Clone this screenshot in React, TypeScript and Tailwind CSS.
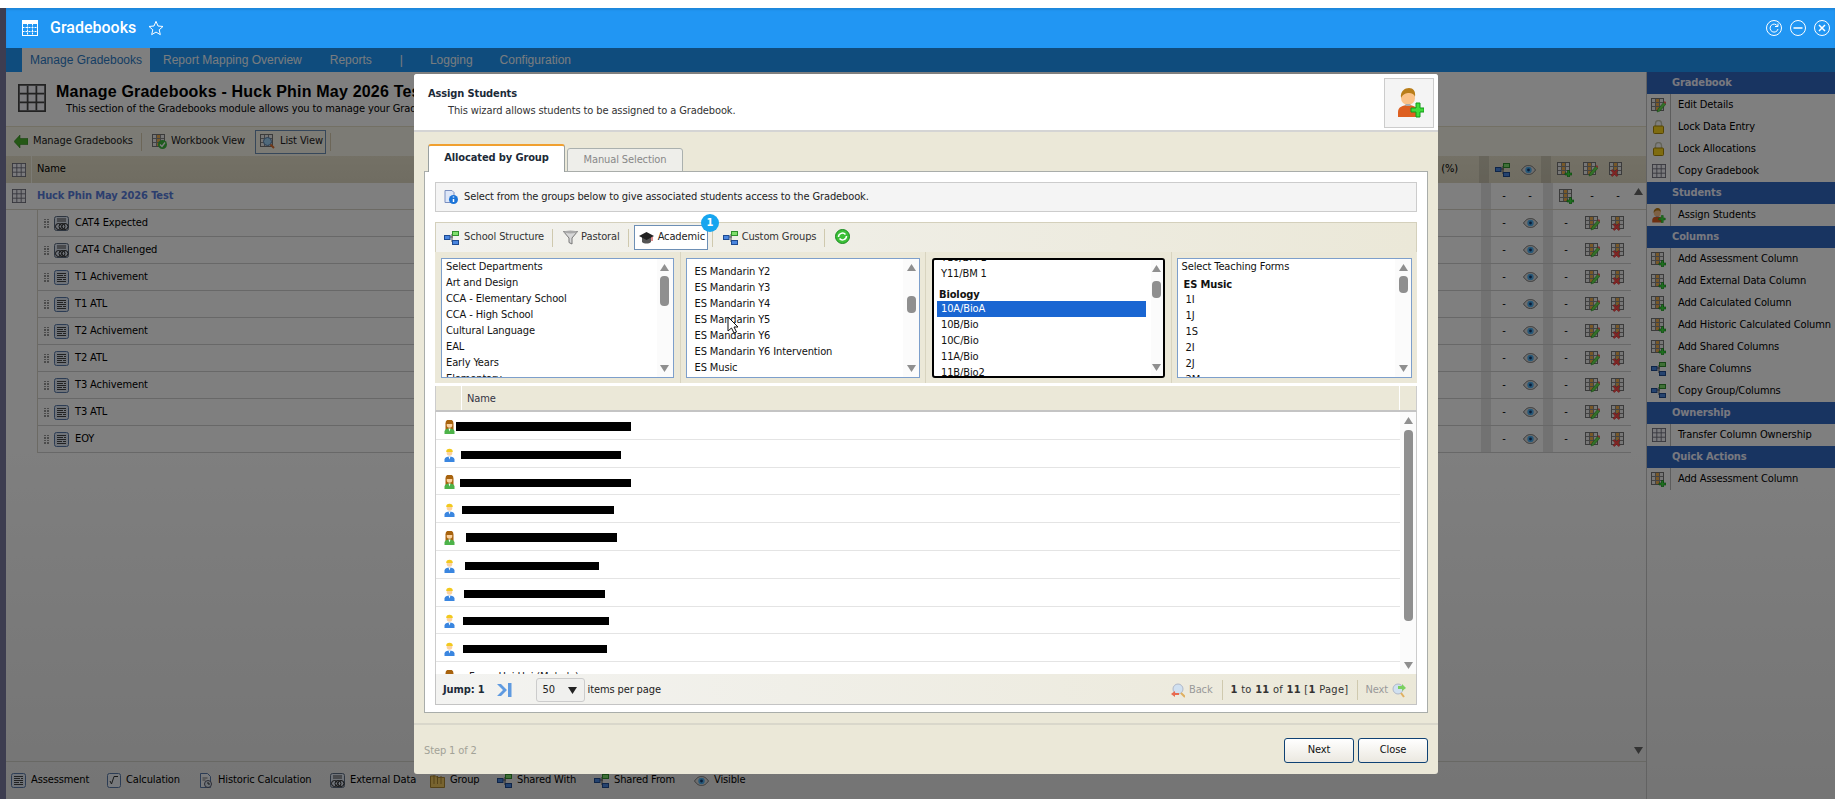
import React from "react";

const T = "font-['DejaVu_Sans_Condensed','Liberation_Sans',sans-serif] text-[11px] tracking-[-0.12px]";

function Grid({ s = 16, c = "#6a6a78", f = "#f4f4fa" }: { s?: number; c?: string; f?: string }) {
  return (
    <svg width={s} height={s} viewBox="0 0 16 16" className="shrink-0">
      <rect x="0.5" y="0.5" width="15" height="15" fill={f} stroke={c} />
      <path d="M5.5 1v14M10.5 1v14M1 5.5h14M1 10.5h14" stroke={c} fill="none" />
    </svg>
  );
}
function GridCheck() {
  return (
    <svg width="15" height="15" viewBox="0 0 15 15" className="shrink-0">
      <rect x="0.500" y="0.500" width="12" height="12" fill="#eee" stroke="#777" />
      <rect x="4.500" y="1" width="4" height="11" fill="#f0b050" />
      <path d="M1 4.500h11M1 8.500h11M4.500 1v11M8.500 1v11" stroke="#888" fill="none" />
      <circle cx="10.500" cy="10.500" r="4.500" fill="#3cb83c" />
      <path d="M8 10.500l2 2 3-4" stroke="#fff" strokeWidth="1.300" fill="none" />
    </svg>
  );
}
function GridLens() {
  return (
    <svg width="15" height="15" viewBox="0 0 15 15" className="shrink-0">
      <rect x="0.500" y="0.500" width="12" height="12" fill="#eee" stroke="#777" />
      <path d="M1 4.500h11M1 8.500h11M4.500 1v11M8.500 1v11" stroke="#888" fill="none" />
      <circle cx="7.500" cy="7.500" r="4" fill="#9fd4f8" stroke="#5b7fa8" />
      <path d="M10.500 10.500l3.500 3.500" stroke="#e07030" strokeWidth="2" />
    </svg>
  );
}
function ColBase() {
  return (
    <>
      <rect x="0.5" y="0.5" width="12" height="12" fill="#eee" stroke="#777" />
      <rect x="4.5" y="1" width="4" height="11" fill="#f0b050" />
      <path d="M1 4.5h11M1 8.5h11M4.5 1v11M8.5 1v11" stroke="#888" fill="none" />
    </>
  );
}
function ColAdd() {
  return (
    <svg width="15" height="15" viewBox="0 0 15 15" className="shrink-0">
      <ColBase />
      <path d="M8 11h2.500V8.500h2V11H15v2h-2.500v2h-2v-2H8z" fill="#3fe040" stroke="#0a7f10" strokeWidth="0.6" />
    </svg>
  );
}
function ColEdit() {
  return (
    <svg width="15" height="15" viewBox="0 0 15 15" className="shrink-0">
      <ColBase />
      <path d="M6 14l1-3 6-7 2 2-6 7z" fill="#68e050" stroke="#1c8a1c" strokeWidth="0.5" />
      <path d="M12.600 4.400l1.200-1.400 1.600 1.600-1.200 1.400z" fill="#ff6060" />
    </svg>
  );
}
function ColDel() {
  return (
    <svg width="15" height="15" viewBox="0 0 15 15" className="shrink-0">
      <ColBase />
      <path d="M2 8.500l1.500-1 2 2 2-2 1.500 1-2 2.500 2 2.500-1.500 1-2-2-2 2-1.500-1 2-2.500z" fill="#ff4a4a" stroke="#c02020" strokeWidth="0.4" />
    </svg>
  );
}
function Share() {
  return (
    <svg width="15" height="14" viewBox="0 0 15 14" className="shrink-0">
      <path d="M6 6h3M8 3v8h1" stroke="#555" fill="none" />
      <rect x="0.500" y="4.500" width="5.500" height="4" fill="#4a86df" stroke="#1e4a90" />
      <rect x="8.500" y="0.500" width="6" height="4" fill="#7fe06c" stroke="#2f8f2c" />
      <rect x="8.500" y="9.500" width="6" height="4" fill="#4a86df" stroke="#1e4a90" />
    </svg>
  );
}
function Eye() {
  return (
    <svg width="15" height="10" viewBox="0 0 15 10" className="shrink-0">
      <path d="M0.500 5C3 1.500 5 0.500 7.500 0.500S12 1.500 14.500 5C12 8.500 10 9.500 7.500 9.500S3 8.500 0.500 5z" fill="#ddd" stroke="#777" />
      <circle cx="7.500" cy="5" r="3.200" fill="#4fb0f0" />
      <circle cx="7.500" cy="5" r="1.400" fill="#123a70" />
    </svg>
  );
}
function Lock() {
  return (
    <svg width="11" height="14" viewBox="0 0 11 14" className="shrink-0">
      <path d="M2.500 6V3.500a3 3 0 0 1 6 0V6" stroke="#c8c8b0" strokeWidth="1.400" fill="none" />
      <rect x="0.500" y="6" width="10" height="7.500" rx="1" fill="#ffd820" stroke="#a88808" />
    </svg>
  );
}
function Person({ kind }: { kind: "m" | "f" }) {
  const hair = kind === "m" ? "#f2c91e" : "#a8630e";
  const body = kind === "m" ? "#3a86e0" : "#4db34a";
  return (
    <svg width="11" height="14" viewBox="0 0 11 14" className="shrink-0">
      {kind === "f" && <path d="M1.500 10V3.500a4 4 0 0 1 8 0V10z" fill={hair} />}
      <path d="M0.500 14v-2.500C0.500 9.500 3 8.500 5.500 8.500s5 1 5 3V14z" fill={body} />
      <path d="M4.500 8.500l1 3 1-3z" fill="#fff" />
      <circle cx="5.500" cy="5" r="2.800" fill="#fbd2a0" />
      <path d="M2.200 4a3.300 3.300 0 0 1 6.600 0z" fill={hair} />
    </svg>
  );
}
function BigPerson({ small = false }: { small?: boolean }) {
  const w = small ? 15 : 27;
  const h = small ? 15 : 30;
  return (
    <svg width={w} height={h} viewBox="0 0 27 30" className="shrink-0">
      <path d="M1 29v-5C1 19 6 17 11 17s10 2 10 7v5z" fill="#dd5f20" />
      <circle cx="11" cy="10" r="7" fill="#fbc288" />
      <path d="M4 10C3 3 8 0 12 0s7 3 6 9c-1-3-3-4-6-4s-6 1-8 5z" fill="#b97d18" />
      <rect x="8.500" y="16" width="5" height="2" fill="#aaa" />
      <path d="M14 19h5v-5h4v5h4v4h-4v5h-4v-5h-5z" transform="translate(0 1)" fill="#3fdc3a" stroke="#129a19" strokeWidth="1" />
    </svg>
  );
}
function Doc() {
  return (
    <svg width="15" height="15" viewBox="0 0 15 15" className="shrink-0">
      <rect x="0.500" y="0.500" width="14" height="14" rx="2" fill="#dfe6f2" stroke="#5878a8" />
      <path d="M3 3.500h9M3 5.500h6M10 5.500h2M3 7.500h9M3 9.500h5M9 9.500h3M3 11.500h9" stroke="#444" fill="none" />
    </svg>
  );
}
function ExtDoc() {
  return (
    <svg width="15" height="15" viewBox="0 0 15 15" className="shrink-0">
      <rect x="0.500" y="0.500" width="14" height="14" rx="2" fill="#dfe6f2" stroke="#5a6a80" />
      <path d="M3 3h9M3 5h9" stroke="#444" fill="none" />
      <circle cx="4.500" cy="10.500" r="3" fill="none" stroke="#222" />
      <circle cx="8" cy="10.500" r="3" fill="none" stroke="#222" />
      <circle cx="11" cy="10.500" r="3" fill="none" stroke="#222" />
    </svg>
  );
}
function Calc() {
  return (
    <svg width="14" height="15" viewBox="0 0 14 15" className="shrink-0">
      <rect x="0.500" y="0.500" width="13" height="14" rx="2" fill="#eef2f8" stroke="#5878a8" />
      <path d="M3 8l1.500 3L7 3.500h4" stroke="#333" fill="none" />
    </svg>
  );
}
function Hist() {
  return (
    <svg width="14" height="15" viewBox="0 0 14 15" className="shrink-0">
      <path d="M1.500 .500h7l3 3v11h-10z" fill="#f2f4f8" stroke="#5878a8" />
      <path d="M3.500 5h5M3.500 7h3" stroke="#777" />
      <circle cx="9" cy="11" r="3.500" fill="#dde8f4" stroke="#556" />
      <path d="M9 9v2h2" stroke="#333" fill="none" />
    </svg>
  );
}
function Folder() {
  return (
    <svg width="15" height="14" viewBox="0 0 15 14" className="shrink-0">
      <path d="M.500 2h5l2 1.500h7v10H.500z" fill="#f0c860" stroke="#a88530" />
      <path d="M4 1v9M7.500 2v8M11 2v8" stroke="#a88530" />
    </svg>
  );
}
function Arrow({ down = false, c = "#8f8f8f" }: { down?: boolean; c?: string }) {
  return (
    <svg width="9" height="7" viewBox="0 0 9 7" className="shrink-0">
      <path d={down ? "M0 0h9L4.500 7z" : "M0 7h9L4.500 0z"} fill={c} />
    </svg>
  );
}
function Scroll({ offset, thumb, w = "w-[16px]" }: { offset: string; thumb: string; w?: string }) {
  return (
    <div className={"flex shrink-0 flex-col items-center bg-[#fbfbfb] py-[5px] " + w}>
      <Arrow />
      <div className={"w-[9px] rounded-[4px] bg-[#8f8f8f] " + offset + " " + thumb} />
      <div className="flex-1" />
      <Arrow down />
    </div>
  );
}
function ListBox({ children, scroll, black = false }: { children: React.ReactNode; scroll: React.ReactNode; black?: boolean }) {
  return (
    <div className={"flex h-[120px] flex-1 overflow-hidden bg-white " + (black ? "border-2 border-black rounded-[3px]" : "border border-[#7d9fcb]")}>
      <div className="min-w-0 flex-1 overflow-hidden text-[#111]">{children}</div>
      {scroll}
    </div>
  );
}
function Li({ children, className = "" }: { children: React.ReactNode; className?: string }) {
  return <div className={"h-[16px] leading-[16px] whitespace-nowrap " + className}>{children}</div>;
}
function Sep({ className = "" }: { className?: string }) {
  return <div className={"w-px bg-[#cfc9ae] shrink-0 " + className} />;
}

const rows = [
  { h: "h-[28px]", p: "f", bar: "ml-[1px] w-[175px] h-[9px]" },
  { h: "h-[28px]", p: "m", bar: "ml-[6px] w-[160px] h-[8px]" },
  { h: "h-[27px]", p: "f", bar: "ml-[5px] w-[171px] h-[8px] mt-[2px]" },
  { h: "h-[28px]", p: "m", bar: "ml-[7px] w-[152px] h-[8px]" },
  { h: "h-[28px]", p: "f", bar: "ml-[11px] w-[151px] h-[9px]" },
  { h: "h-[28px]", p: "m", bar: "ml-[10px] w-[134px] h-[8px]" },
  { h: "h-[28px]", p: "m", bar: "ml-[9px] w-[141px] h-[8px]" },
  { h: "h-[27px]", p: "m", bar: "ml-[8px] w-[146px] h-[8px]" },
  { h: "h-[28px]", p: "m", bar: "ml-[8px] w-[144px] h-[8px] mt-[1px]" },
] as const;

function Modal() {
  return (
    <div className={"absolute left-[408px] top-[66px] flex h-[700px] w-[1024px] flex-col overflow-hidden rounded-[3px] bg-[#ebe8d8] text-[#222] " + T}>
      <div className="flex h-[58px] shrink-0 justify-between border-b-2 border-[#d4d4d4] bg-white pl-[14px] pr-[4px] pt-[4px]">
        <div className="pt-[8px]">
          <div className="font-bold leading-[16px] text-[#1c2a38]">Assign Students</div>
          <div className="mt-[1px] pl-[20px] leading-[16px] text-[#333]">This wizard allows students to be assigned to a Gradebook.</div>
        </div>
        <div className="flex h-[50px] w-[50px] items-center justify-center border border-[#cccccc] bg-[#f4f4f4] pl-[3px]">
          <BigPerson />
        </div>
      </div>

      <div className="flex flex-1 flex-col px-[10px] pt-[12px] pb-[10px]">
        <div className="-mb-px flex h-[28px] shrink-0 items-end gap-[2px] pl-[4px]">
          <div className="relative z-10 flex h-[28px] w-[137px] items-center justify-center rounded-t-[3px] border-x border-[#99a0a0] border-t-2 border-t-[#f0a030] bg-white pb-[2px] font-bold text-[#1c2a38]">Allocated by Group</div>
          <div className="flex h-[24px] w-[116px] items-center justify-center rounded-t-[3px] border border-[#aab0ae] bg-[#eeeeea] text-[#888]">Manual Selection</div>
        </div>
        <div className="flex flex-1 flex-col border border-[#a9adaa] bg-white px-[10px] pt-[10px]">
          <div className="flex h-[30px] shrink-0 items-center gap-[6px] border border-[#cccccc] bg-[#f4f4f4] pl-[8px] text-[#222]">
            <svg width="14" height="14" viewBox="0 0 14 14" className="shrink-0">
              <path d="M1 .500h7l2 2v10H1z" fill="#dde6f8" stroke="#7a8fc0" />
              <circle cx="9.500" cy="9.500" r="4.500" fill="#1c74d8" />
              <path d="M9.500 6.500v1M9.500 9v3" stroke="#fff" strokeWidth="1.500" />
            </svg>
            Select from the groups below to give associated students access to the Gradebook.
          </div>

          <div className="mt-[10px] flex h-[30px] shrink-0 items-center border border-b-0 border-[#d4d0bc] bg-gradient-to-r from-[#f2f2ef] to-[#ebe8d8] pl-[8px] text-[#333]">
            <Share />
            <span className="ml-[5px]">School Structure</span>
            <Sep className="ml-[8px] h-[18px]" />
            <svg width="15" height="15" viewBox="0 0 15 15" className="ml-[10px] shrink-0">
              <path d="M.500 1.500h14L9 8v6l-3-1.500V8z" fill="#d8d8d8" stroke="#777" />
              <ellipse cx="7.500" cy="2" rx="7" ry="1.500" fill="#aaa" />
            </svg>
            <span className="ml-[3px]">Pastoral</span>
            <Sep className="ml-[8px] h-[18px]" />
            <div className="ml-[5px] flex h-[25px] w-[74px] shrink-0 items-center border border-[#6d8fb5] bg-white pl-[4px] text-[#222]">
              <svg width="15" height="12" viewBox="0 0 15 12" className="shrink-0">
                <path d="M3 5v5c2 2 7 2 9 0V5z" fill="#555" />
                <path d="M0 4l7.500-4L15 4l-7.500 4z" fill="#222" />
                <path d="M13 5v4" stroke="#c02020" />
              </svg>
              <span className="ml-[4px]">Academic</span>
            </div>
            <Sep className="ml-[4px] h-[18px]" />
            <div className="ml-[10px]"><Share /></div>
            <span className="ml-[4px]">Custom Groups</span>
            <Sep className="ml-[8px] h-[18px]" />
            <svg width="15" height="15" viewBox="0 0 15 15" className="ml-[10px] -mt-[2px] shrink-0">
              <circle cx="7.500" cy="7.500" r="7" fill="#3cc038" stroke="#1a8a20" />
              <path d="M3.500 8a4 4 0 0 1 7-2.500M11.500 7a4 4 0 0 1-7 2.500" stroke="#fff" strokeWidth="1.500" fill="none" />
            </svg>
          </div>

          <div className="grid h-[131px] shrink-0 grid-cols-4 bg-[#ebe8d8]">
            <div className="flex border-r border-[#d8d4c0] px-[6px] pt-[6px]">
              <ListBox scroll={<Scroll offset="mt-[5px]" thumb="h-[30px]" />}>
                <div className="pl-[4px]">
                  {["Select Departments", "Art and Design", "CCA - Elementary School", "CCA - High School", "Cultural Language", "EAL", "Early Years", "Elementary"].map((t) => (
                    <Li key={t}>{t}</Li>
                  ))}
                </div>
              </ListBox>
            </div>
            <div className="flex border-r border-[#d8d4c0] px-[5px] pt-[6px]">
              <ListBox scroll={<Scroll offset="mt-[25px]" thumb="h-[17px]" />}>
                <div className="pl-[8px] pt-[5px]">
                  {["ES Mandarin Y2", "ES Mandarin Y3", "ES Mandarin Y4", "ES Mandarin Y5", "ES Mandarin Y6", "ES Mandarin Y6 Intervention", "ES Music"].map((t) => (
                    <Li key={t}>{t}</Li>
                  ))}
                </div>
              </ListBox>
            </div>
            <div className="flex border-r border-[#d8d4c0] px-[6px] pt-[6px]">
              <ListBox black scroll={<Scroll w="w-[12px]" offset="mt-[9px]" thumb="h-[17px]" />}>
                <div className="-mt-[10px] pl-[3px] pr-[5px]">
                  <Li className="pl-[4px]">Y10/BM 1</Li>
                  <Li className="pl-[4px]">Y11/BM 1</Li>
                  <Li className="mt-[5px] -mb-[2px] pl-[2px] font-bold">Biology</Li>
                  <Li className="bg-[#1a66d2] pl-[4px] text-white">10A/BioA</Li>
                  <Li className="pl-[4px]">10B/Bio</Li>
                  <Li className="pl-[4px]">10C/Bio</Li>
                  <Li className="pl-[4px]">11A/Bio</Li>
                  <Li className="pl-[4px]">11B/Bio2</Li>
                </div>
              </ListBox>
            </div>
            <div className="flex px-[5px] pt-[6px]">
              <ListBox scroll={<Scroll offset="mt-[5px]" thumb="h-[17px]" />}>
                <div className="pl-[4px]">
                  <Li>Select Teaching Forms</Li>
                  <Li className="mt-[2px] -mb-[1px] pl-[2px] font-bold">ES Music</Li>
                  {["1I", "1J", "1S", "2I", "2J", "2M"].map((t) => (
                    <Li key={t} className="pl-[4px]">{t}</Li>
                  ))}
                </div>
              </ListBox>
            </div>
          </div>

          <div className="mt-[3px] flex h-[26px] shrink-0 border-x border-b-2 border-x-[#cccccc] border-b-[#c4c4c4] bg-[#ebe8d8] text-[#334]">
            <div className="w-[26px] border-r border-white" />
            <div className="flex flex-1 items-center border-r border-white pl-[5px] pt-[2px]">Name</div>
            <div className="w-[16px]" />
          </div>
          <div className="flex h-[262px] shrink-0 overflow-hidden border-x border-[#cccccc] bg-white">
            <div className="min-w-0 flex-1 overflow-hidden">
              {rows.map((r, i) => (
                <div key={i} className={"flex shrink-0 items-center border-b border-[#e4e4e4] pl-[8px] pt-[2px] " + r.h}>
                  <Person kind={r.p} />
                  <div className={"bg-black " + r.bar} />
                </div>
              ))}
              <div className="flex items-start pl-[8px] pt-[8px]">
                <Person kind="f" />
                <span className="ml-[14px] leading-[14px]">Fong, Hoi Hoi (Melody)</span>
              </div>
            </div>
            <Scroll offset="mt-[6px]" thumb="h-[191px]" />
          </div>
          <div className="flex h-[31px] shrink-0 items-center border border-t-0 border-[#c4c4c4] bg-gradient-to-r from-[#f3f3f1] to-[#ebe8d8] pl-[7px] pr-[10px] pt-[2px] text-[#222]">
            <b className="text-[#1c2a38]">Jump: 1</b>
            <svg width="15" height="14" viewBox="0 0 15 14" className="ml-[12px] shrink-0">
              <path d="M0 1h4l6 6-6 6H0l6-6z" fill="#5f9ae0" />
              <rect x="11" y="0" width="3.500" height="14" fill="#5f9ae0" />
            </svg>
            <div className="ml-[24px] flex h-[24px] w-[49px] items-center justify-between rounded-[3px] border border-[#cccccc] bg-[#f0f0ee] px-[6px] pr-[7px]">
              50
              <Arrow down c="#222" />
            </div>
            <span className="ml-[3px]">items per page</span>
            <div className="flex-1" />
            <svg width="14" height="15" viewBox="0 0 14 15" className="shrink-0">
              <circle cx="7" cy="6" r="5" fill="#d0e0f0" stroke="#b0b8c8" />
              <path d="M10 10l4 4" stroke="#e0b060" strokeWidth="2" />
              <path d="M0 11l4-3v2h4v2H4v2z" fill="#e86a50" />
            </svg>
            <span className="ml-[4px] text-[#999]">Back</span>
            <Sep className="ml-[9px] h-[20px]" />
            <span className="ml-[8px] tracking-[0.3px] text-[#333]"><b>1</b> to <b>11</b> of <b>11</b> [<b>1</b> Page]</span>
            <Sep className="ml-[9px] h-[20px]" />
            <span className="ml-[7px] text-[#999]">Next</span>
            <svg width="14" height="15" viewBox="0 0 14 15" className="ml-[4px] shrink-0">
              <circle cx="6" cy="6" r="5" fill="#d0e0f0" stroke="#b0b8c8" />
              <path d="M9 10l3 4" stroke="#e0b060" strokeWidth="2" />
              <path d="M14 5l-4-4v2H6v3h4v2z" fill="#7bd060" />
            </svg>
          </div>
        </div>
      </div>

      <div className="flex h-[51px] shrink-0 items-center justify-between border-t-2 border-t-[#d9d7cb] px-[10px] pt-[2px]">
        <span className="mt-[2px] text-[#a2a297]">Step 1 of 2</span>
        <div className="flex gap-[4px]">
          <div className="flex h-[25px] w-[70px] items-center justify-center rounded-[3px] border border-[#0f4274] bg-gradient-to-b from-white to-[#ebe8e0] text-[#111]">Next</div>
          <div className="flex h-[25px] w-[70px] items-center justify-center rounded-[3px] border border-[#0f4274] bg-gradient-to-b from-white to-[#ebe8e0] text-[#111]">Close</div>
        </div>
      </div>
    </div>
  );
}

const side: { head: string; items: [string, React.ReactNode][] }[] = [
  {
    head: "Gradebook",
    items: [
      ["Edit Details", <ColEdit />],
      ["Lock Data Entry", <Lock />],
      ["Lock Allocations", <Lock />],
      ["Copy Gradebook", <Grid s={14} />],
    ],
  },
  { head: "Students", items: [["Assign Students", <BigPerson small />]] },
  {
    head: "Columns",
    items: [
      ["Add Assessment Column", <ColAdd />],
      ["Add External Data Column", <ColAdd />],
      ["Add Calculated Column", <ColAdd />],
      ["Add Historic Calculated Column", <ColAdd />],
      ["Add Shared Columns", <ColAdd />],
      ["Share Columns", <Share />],
      ["Copy Group/Columns", <Share />],
    ],
  },
  { head: "Ownership", items: [["Transfer Column Ownership", <Grid s={14} />]] },
  { head: "Quick Actions", items: [["Add Assessment Column", <ColAdd />]] },
];

function Cols({ a, b, c, d, e }: { a: React.ReactNode; b: React.ReactNode; c: React.ReactNode; d: React.ReactNode; e: React.ReactNode }) {
  const cell = "flex w-[26px] items-center justify-center";
  return (
    <div className="flex h-full shrink-0">
      <div className="w-[10px] bg-black/10" />
      <div className={cell}>{a}</div>
      <div className={cell}>{b}</div>
      <div className="w-[10px] bg-black/10" />
      <div className={cell}>{c}</div>
      <div className={cell}>{d}</div>
      <div className={cell}>{e}</div>
    </div>
  );
}

const children = ["CAT4 Expected", "CAT4 Challenged", "T1 Achivement", "T1 ATL", "T2 Achivement", "T2 ATL", "T3 Achivement", "T3 ATL", "EOY"];
const legend: [string, React.ReactNode, string][] = [
  ["Assessment", <Doc />, "w-[96px]"],
  ["Calculation", <Calc />, "w-[92px]"],
  ["Historic Calculation", <Hist />, "w-[131px]"],
  ["External Data", <ExtDoc />, "w-[100px]"],
  ["Group", <Folder />, "w-[67px]"],
  ["Shared With", <Share />, "w-[97px]"],
  ["Shared From", <Share />, "w-[100px]"],
  ["Visible", <Eye />, "w-[60px]"],
];

export default function App() {
  return (
    <div className={"flex h-screen w-full flex-col overflow-hidden bg-white " + T}>
      <div className="h-[8px] shrink-0 bg-white" />
      <div className="flex min-h-0 flex-1">
        <div className="w-[6px] shrink-0 bg-[#3d3d50]" />
        <div className="relative flex min-w-0 flex-1 flex-col">
          <div className="flex h-[40px] shrink-0 items-center bg-[#2196f3] pl-[16px] text-white shadow-[inset_0_2px_2px_rgba(0,0,0,0.1)]">
            <svg width="16" height="16" viewBox="0 0 16 16" className="shrink-0">
              <rect x="0.500" y="0.500" width="15" height="15" fill="none" stroke="#fff" />
              <rect x="1" y="1" width="14" height="3" fill="#fff" />
              <path d="M5.500 4v11M10.500 4v11M1 7.500h14M1 11.500h14" stroke="#fff" fill="none" strokeDasharray="1 .5" />
            </svg>
            <span className="ml-[12px] font-['Roboto',sans-serif] text-[16px] font-medium tracking-normal">Gradebooks</span>
            <svg width="16" height="16" viewBox="0 0 24 24" fill="none" stroke="#fff" strokeWidth="1.500" className="ml-[12px]">
              <path d="M12 2l3 7 7.500.7-5.700 5 1.700 7.300-6.500-3.900L5.500 22l1.700-7.300-5.700-5L9 9z" />
            </svg>
            <div className="flex-1" />
            <div className="mr-[5px] flex gap-[8px]">
              <svg width="16" height="16" viewBox="0 0 16 16" fill="none" stroke="#fff" className="shrink-0">
                <circle cx="8" cy="8" r="7.500" />
                <path d="M11.500 6a4 4 0 1 0 .5 3M12 3.500v3h-3" />
              </svg>
              <svg width="16" height="16" viewBox="0 0 16 16" fill="none" stroke="#fff" className="shrink-0">
                <circle cx="8" cy="8" r="7.500" />
                <path d="M3.500 8h9" strokeWidth="1.500" />
              </svg>
              <svg width="16" height="16" viewBox="0 0 16 16" fill="none" stroke="#fff" className="shrink-0">
                <circle cx="8" cy="8" r="7.500" />
                <path d="M5 5l6 6M11 5l-6 6" strokeWidth="1.500" />
              </svg>
            </div>
          </div>

          <div className="flex h-[24px] shrink-0 items-center bg-[#1e98fa] pl-[16px] font-['Liberation_Sans',sans-serif] text-[12px] tracking-normal text-[#f0f8ff]">
            <div className="flex h-full w-[128px] items-center justify-center bg-white text-[#2c7cc8]">Manage Gradebooks</div>
            <span className="ml-[13px]">Report Mapping Overview</span>
            <span className="ml-[28px]">Reports</span>
            <span className="ml-[28px]">|</span>
            <span className="ml-[27px]">Logging</span>
            <span className="ml-[27px]">Configuration</span>
          </div>

          <div className="flex min-h-0 flex-1 bg-gradient-to-b from-white via-white to-[#eaeaea]">
            <div className="flex min-w-0 flex-1 flex-col">
              <div className="flex h-[55px] shrink-0 items-center border-b border-[#e6e0c8] pb-[2px] pl-[12px]">
                <Grid s={28} c="#444" f="#f6f6fc" />
                <div className="ml-[10px]">
                  <div className="whitespace-nowrap font-['Liberation_Sans',sans-serif] text-[16px] font-bold leading-[20px] tracking-[0.2px] text-black">Manage Gradebooks - Huck Phin May 2026 Test</div>
                  <div className="ml-[10px] whitespace-nowrap leading-[13px] text-black">This section of the Gradebooks module allows you to manage your Gradebooks.</div>
                </div>
              </div>
              <div className="flex h-[29px] shrink-0 items-center bg-[#f8f6ea] pl-[8px] text-[#222]">
                <svg width="14" height="13" viewBox="0 0 14 13" className="shrink-0">
                  <path d="M0 6.500L6 0v3.500h8v6H6V13z" fill="#4ab02c" stroke="#1f7a10" strokeWidth="0.500" />
                </svg>
                <span className="ml-[5px]">Manage Gradebooks</span>
                <Sep className="ml-[8px] h-[18px] bg-[#d8ccb0]" />
                <div className="ml-[10px]"><GridCheck /></div>
                <span className="ml-[4px]">Workbook View</span>
                <div className="ml-[10px] flex h-[24px] w-[71px] shrink-0 items-center border border-[#6d8fb5] pl-[4px]">
                  <GridLens />
                  <span className="ml-[5px]">List View</span>
                </div>
                <Sep className="ml-[4px] h-[18px] bg-[#d8ccb0]" />
              </div>
              <div className="flex h-[27px] shrink-0 items-center bg-gradient-to-b from-[#e8e2cc] to-[#e0dac4] text-black">
                <div className="flex h-full w-[26px] items-center justify-center border-r border-[#f8f6ea]"><Grid s={14} /></div>
                <span className="ml-[5px]">Name</span>
                <div className="flex-1" />
                <span className="mr-[21px]">(%)</span>
                <Cols
                  a={<Share />}
                  b={<Eye />}
                  c={<ColAdd />}
                  d={<ColEdit />}
                  e={<ColDel />}
                />
                <div className="w-[17px]" />
              </div>
              <div className="flex h-[27px] shrink-0 items-center border-b border-[#d8d4c8] pr-[15px]">
                <div className="flex w-[26px] justify-center"><Grid s={14} /></div>
                <span className="ml-[5px] font-bold text-[#587cdc]">Huck Phin May 2026 Test</span>
                <div className="flex-1" />
                <Cols a="-" b="-" c={<ColAdd />} d="-" e="-" />
              </div>
              <div className="ml-[31px] mr-[15px] flex flex-col border-l border-[#d8d4c8]">
                {children.map((c, i) => (
                  <div key={c} className="flex h-[27px] items-center border-b border-[#d0d0d0] pl-[6px]">
                    <div className="grid grid-cols-2 gap-[1px] opacity-60">
                      {[0, 1, 2, 3, 4, 5, 6, 7].map((d) => (
                        <div key={d} className="h-[1.5px] w-[2px] bg-[#555]" />
                      ))}
                    </div>
                    <div className="ml-[5px]">{i < 2 ? <ExtDoc /> : <Doc />}</div>
                    <span className="ml-[6px] text-black">{c}</span>
                    <div className="flex-1" />
                    <Cols a="-" b={<Eye />} c="-" d={<ColEdit />} e={<ColDel />} />
                  </div>
                ))}
              </div>
              <div className="flex-1" />
              <div className="flex h-[38px] shrink-0 items-center border-t border-[#d0d0c8] pl-[5px] text-black">
                {legend.map(([t, ic, w]) => (
                  <div key={t} className={"flex shrink-0 items-center gap-[5px] " + w}>
                    {ic}
                    {t}
                  </div>
                ))}
              </div>
            </div>
            <div className="flex w-[189px] shrink-0 flex-col border-l border-[#c4c4c4] text-black">
              {side.map((g) => (
                <div key={g.head}>
                  <div className="flex h-[22px] items-center bg-[#3068c2] pl-[25px] font-bold text-[#f0f2ff]">{g.head}</div>
                  {g.items.map(([t, ic]) => (
                    <div key={t + g.head} className="flex h-[22px] items-center">
                      <div className="flex h-full w-[24px] items-center justify-center border-r border-[#bbbbbb]">{ic}</div>
                      <span className="ml-[7px] whitespace-nowrap">{t}</span>
                    </div>
                  ))}
                </div>
              ))}
            </div>
          </div>

          <div className="pointer-events-none absolute inset-x-0 bottom-0 top-[40px] bg-black/50" />
          <div className="absolute left-[1628px] top-[180px]"><Arrow c="#333" /></div>
          <div className="absolute left-[1628px] top-[739px]"><Arrow down c="#333" /></div>
          <Modal />
          <svg width="13" height="18" viewBox="0 0 13 18" className="absolute left-[721px] top-[308px]">
            <path d="M1 1v14l3.500-3 2.500 5 2.500-1-2.500-5H11z" fill="#fff" stroke="#111" strokeWidth="1" />
          </svg>
          <div className="absolute left-[695px] top-[206px] flex h-[18px] w-[18px] items-center justify-center rounded-full bg-[#16a5ef] font-bold text-white">1</div>
        </div>
      </div>
    </div>
  );
}
